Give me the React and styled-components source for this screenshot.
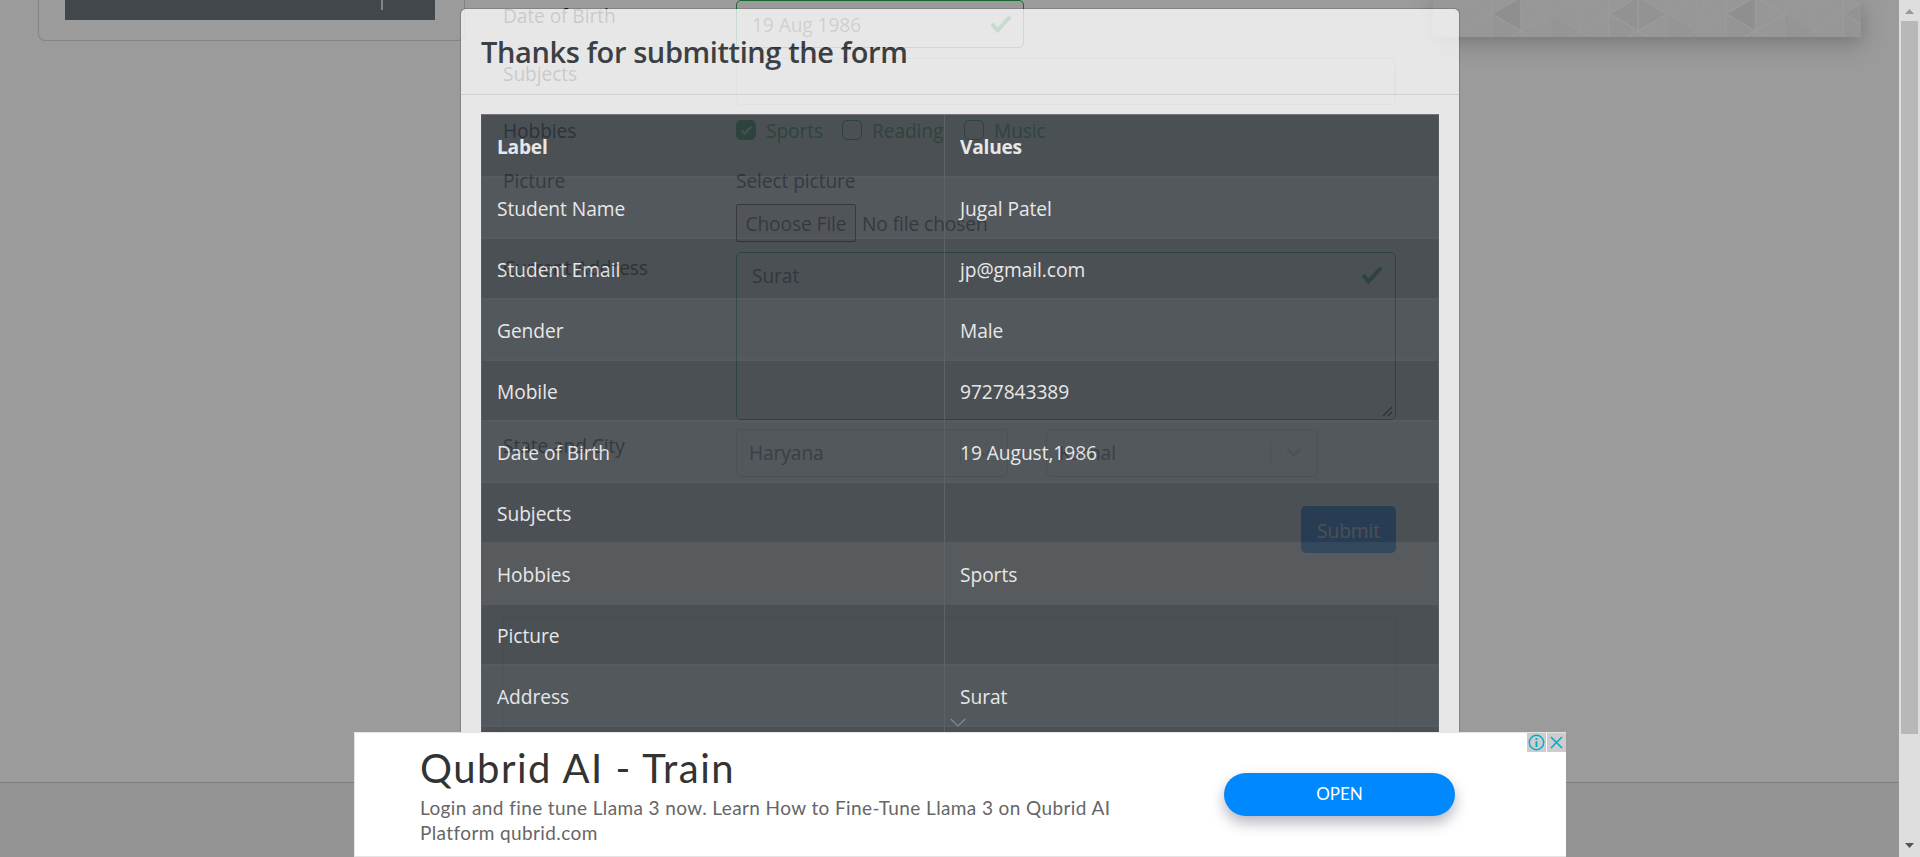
import React from "react";
import styled, { createGlobalStyle } from "styled-components";

const Global = createGlobalStyle`
  *, *::before, *::after { box-sizing: border-box; }
  body {
    margin: 0;
    overflow: hidden;
    background: #9b9b9b;
    color: #14171a;
    font-family: "Open Sans", "Noto Sans", sans-serif;
    font-size: 19.2px;
    line-height: 30px;
  }
`;

const Screen = styled.div`
  display: flex;
  width: 1920px;
  height: 857px;
  overflow: hidden;
  position: relative;
`;

const Main = styled.div`
  width: 1899px;
  display: flex;
  flex-direction: column;
`;

const Content = styled.main`
  height: 782px;
  display: flex;
  align-items: flex-start;
  padding-left: 38px;
`;

const Footer = styled.footer`
  flex: 1;
  border-top: 1px solid #7d7d7d;
  background: #949494;
`;

const SideNav = styled.aside`
  width: 427px;
  height: 41px;
  padding: 0 29px 0 26px;
  border: 1px solid #848484;
  border-top: 0;
  border-radius: 0 0 7px 7px;
`;

const NavBlock = styled.div`
  height: 20px;
  display: flex;
  justify-content: flex-end;
  padding-right: 52px;
  background: #42474b;
`;

const NavThumb = styled.i`
  width: 2px;
  height: 10px;
  background: #858585;
`;

const Form = styled.div`
  width: 893px;
  margin-left: 38px;
  letter-spacing: -0.1px;
`;

const Field = styled.div`
  display: flex;
  height: ${(p) => p.$h}px;
`;

const Label = styled.div`
  width: 233px;
  padding-top: ${(p) => p.$top}px;
  white-space: nowrap;
`;

const Control = styled.div`
  width: ${(p) => p.$w}px;
  height: ${(p) => p.$h}px;
  padding: ${(p) => p.$pad};
  display: flex;
  justify-content: space-between;
  border: 1px solid ${(p) => (p.$valid ? "#196630" : "#7d7d7d")};
  border-radius: 5px;
  color: #2d3135;
`;

const AreaEnd = styled.div`
  display: flex;
  flex-direction: column;
  align-items: flex-end;
  justify-content: space-between;
`;

const Checks = styled.div`
  display: flex;
  align-items: flex-start;
  color: #196630;
`;

const Box = styled.span`
  width: 20px;
  height: 20px;
  margin: 5px 10px 0 0;
  display: grid;
  place-items: center;
  border: 1px solid #196630;
  border-radius: 5px;
  background: ${(p) => (p.$on ? "#196630" : "transparent")};
`;

const CheckText = styled.span`
  width: ${(p) => p.$w}px;
  padding-top: 1px;
  white-space: nowrap;
`;

const FileRow = styled.div`
  display: flex;
  align-items: center;
  gap: 6px;
  white-space: nowrap;
`;

const FileButton = styled.div`
  width: 120px;
  height: 38px;
  border: 1px solid #202020;
  border-radius: 2px;
  background: #929192;
  line-height: 38px;
  text-align: center;
`;

const FileName = styled.span`
  padding-top: 1px;
`;

const Picture = styled.div`
  display: flex;
  flex-direction: column;
  gap: 8px;
  padding-top: 1px;
`;

const Separator = styled.i`
  width: 1px;
  height: 25px;
  margin-left: auto;
  background: #7d7d7d;
`;

const Selects = styled.div`
  display: flex;
  gap: 38px;
`;

const SelectValue = styled.span`
  line-height: 46px;
`;

const SelectEnd = styled.div`
  display: flex;
  align-items: center;
  gap: 15px;
  padding-right: 15px;
`;

const InputValue = styled.span`
  line-height: ${(p) => p.$lh}px;
`;

const TickSlot = styled.span`
  display: flex;
  padding: ${(p) => p.$pad};
`;

const Submit = styled.div`
  width: 95px;
  height: 47px;
  margin: 0 0 63px auto;
  border-radius: 5px;
  background: #004b9b;
  color: #9b9b9b;
  line-height: 50px;
  text-align: center;
`;

const EmptySlot = styled.div`
  height: 160px;
  border: 1px solid #8f8f8f;
`;

const Promo = styled.aside`
  width: 428px;
  height: 37px;
  margin-left: 37px;
  background: #979797;
  box-shadow: 0 8px 26px 2px rgba(0, 0, 0, 0.13), 0 4px 14px rgba(0, 0, 0, 0.1);
  svg { display: block; }
`;

const Backdrop = styled.div`
  position: absolute;
  inset: 8px 0 0 460px;
  width: 1000px;
`;

const Modal = styled.div`
  height: 900px;
  border: 1px solid rgba(0, 0, 0, 0.2);
  border-radius: 6px;
  background: #fff;
  background-clip: padding-box;
  opacity: 0.77;
  color: #212529;
`;

const ModalHeader = styled.header`
  height: 86px;
  padding: 14px 20px;
  border-bottom: 1px solid #dee2e6;
  font-size: 29px;
  font-weight: 600;
  line-height: 57px;
  letter-spacing: -0.4px;
`;

const Table = styled.div`
  width: 958px;
  margin: 19px 0 0 20px;
  border: 1px solid #454d55;
  border-bottom: 0;
  border-top-color: #6a6a6f;
  background: #343a40;
  color: #fff;
`;

const Row = styled.div`
  display: grid;
  grid-template-columns: 462px 1fr;
  height: ${(p) => (p.$head ? 63 : 61)}px;
  border-bottom: 2px solid #414850;
  background: ${(p) => (p.$head || p.$plain ? "#343a40" : p.$hover ? "#43494b" : "#3e444a")};
  font-weight: ${(p) => (p.$head ? 700 : 500)};
  line-height: ${(p) => (p.$head ? 63 : 61)}px;
`;

const Cell = styled.div`
  padding-left: 15px;
  border-left: ${(p) => (p.$value ? "1px solid #4b535b" : "0")};
  letter-spacing: ${(p) => (p.$tight ? -0.25 : -0.06)}px;
`;

const Ad = styled.section`
  position: absolute;
  left: 354px;
  top: 732px;
  width: 1212px;
  height: 125px;
  display: flex;
  border: 1px solid #e4e4e4;
  border-right: 0;
  background: #fff;
  font-family: Lato, sans-serif;
`;

const AdCopy = styled.div`
  width: 700px;
  margin-left: 65px;
  padding-top: 9px;
`;

const AdTitle = styled.div`
  color: #333;
  font-size: 40px;
  line-height: 52px;
  letter-spacing: 1.5px;
`;

const AdText = styled.div`
  color: #666;
  font-size: 19px;
  line-height: 25px;
  letter-spacing: 0.39px;
  padding-top: 1px;
  white-space: nowrap;
`;

const AdButton = styled.div`
  width: 231px;
  height: 43px;
  margin: 40px 0 0 104px;
  border-radius: 22px;
  background: #08f;
  box-shadow: 0 7px 14px rgba(40, 40, 70, 0.34);
  color: #fff;
  font-size: 17px;
  line-height: 42px;
  text-align: center;
`;

const AdControls = styled.div`
  display: flex;
  gap: 1px;
  margin-left: auto;
`;

const AdControl = styled.span`
  display: grid;
  place-items: center;
  width: 19px;
  height: 19px;
  background: #cdcdcd;
`;

const Collapse = styled.svg`
  position: absolute;
  left: 950px;
  top: 718px;
`;

const Scrollbar = styled.div`
  width: 21px;
  display: flex;
  flex-direction: column;
  align-items: center;
  padding: 9px 0;
  background: #dedede;
`;

const Thumb = styled.i`
  width: 17px;
  height: 713px;
  margin: 7px 0 auto;
  background: #b8b8b8;
`;

const Tick = ({ w = 20, h = 17, color = "#196630", sw = 4 }) => (
  <svg width={w} height={h} viewBox="0 0 20 17" fill="none">
    <path d="M2 9.2 L6.6 14.4 L18 2" stroke={color} strokeWidth={sw} strokeLinecap="round" />
  </svg>
);

const Chevron = () => (
  <svg width="16" height="10" viewBox="0 0 16 10" fill="none">
    <path d="M2 1.5 L8 7.5 L14 1.5" stroke="#7d7d7d" strokeWidth="2.4" strokeLinecap="round" />
  </svg>
);

const Grip = () => (
  <svg width="11" height="11" viewBox="0 0 11 11">
    <path d="M1 10 L10 1 M6 10 L10 6" stroke="#151515" strokeWidth="1.2" />
  </svg>
);

const Pattern = () => (
  <svg width="428" height="37">
    {[0, 1, 2, 3, 4, 5, 6, 7].map((i) => (
      <g key={i} transform={`translate(${i * 58.6} 0)`}>
        <path
          d="M0 14 L29.3 -3 V31 Z"
          fill="#8f8f8f"
          opacity={[0, 1, 0, 0.6, 0, 1, 0, 0.5][i]}
        />
        <path
          d="M29.3 -3 L58.6 14 L29.3 31 Z"
          fill="#929292"
          opacity={[0, 0, 0, 0.7, 0, 0, 0, 0.4][i]}
        />
        <path d="M0 37 V14 L29.3 31 V37 Z" fill="#949494" opacity="0.6" />
        <path
          d="M0 14 L29.3 -3 L58.6 14 L29.3 31 Z M29.3 31 L19 37 M29.3 31 L40 37 M0 0 V37 M29.3 0 V37"
          fill="none"
          stroke="#9b9b9b"
          strokeWidth="1.5"
          opacity={i % 2 ? 0.9 : 0.5}
        />
      </g>
    ))}
  </svg>
);

const Select = ({ value }) => (
  <Control $w={272} $h={48} $pad="0 0 0 12px">
    <SelectValue>{value}</SelectValue>
    <SelectEnd>
      <Separator />
      <Chevron />
    </SelectEnd>
  </Control>
);

const rows = [
  ["Student Name", "Jugal Patel"],
  ["Student Email", "jp@gmail.com"],
  ["Gender", "Male"],
  ["Mobile", "9727843389"],
  ["Date of Birth", "19 August,1986"],
  ["Subjects", ""],
  ["Hobbies", "Sports"],
  ["Picture", ""],
  ["Address", "Surat"],
  ["", ""],
];

export default function App() {
  return (
    <Screen>
      <Global />
      <Main>
        <Content>
          <SideNav>
            <NavBlock><NavThumb /></NavBlock>
          </SideNav>
          <Form>
            <Field $h={58}>
              <Label $top={1}>Date of Birth</Label>
              <Control $w={288} $h={48} $valid $pad="0 12px 0 15px">
                <InputValue $lh={48}>19 Aug 1986</InputValue>
                <TickSlot $pad="15px 0 0"><Tick /></TickSlot>
              </Control>
            </Field>
            <Field $h={57}>
              <Label $top={1}>Subjects</Label>
              <Control $w={660} $h={47} $pad="10px 0">
                <Separator />
              </Control>
            </Field>
            <Field $h={50}>
              <Label $top={1}>Hobbies</Label>
              <Checks>
                <Box $on><Tick w={11} h={9} color="#9b9b9b" sw={3.6} /></Box>
                <CheckText $w={76}>Sports</CheckText>
                <Box />
                <CheckText $w={92}>Reading</CheckText>
                <Box />
                <CheckText $w={60}>Music</CheckText>
              </Checks>
            </Field>
            <Field $h={87}>
              <Label $top={1}>Picture</Label>
              <Picture>
                <span>Select picture</span>
                <FileRow>
                  <FileButton>Choose File</FileButton>
                  <FileName>No file chosen</FileName>
                </FileRow>
              </Picture>
            </Field>
            <Field $h={177}>
              <Label $top={1}>Current Address</Label>
              <Control $w={660} $h={168} $valid $pad="0 2px 2px 15px">
                <InputValue $lh={46}>Surat</InputValue>
                <AreaEnd>
                  <TickSlot $pad="14px 11px 0 0"><Tick /></TickSlot>
                  <Grip />
                </AreaEnd>
              </Control>
            </Field>
            <Field $h={77}>
              <Label $top={2}>State and City</Label>
              <Selects>
                <Select value="Haryana" />
                <Select value="Karnal" />
              </Selects>
            </Field>
            <Submit>Submit</Submit>
            <EmptySlot />
          </Form>
          <Promo><Pattern /></Promo>
        </Content>
        <Footer />
      </Main>
      <Scrollbar>
        <svg width="9" height="5"><path d="M4.5 0 L9 5 H0 Z" fill="#9a9a9a" /></svg>
        <Thumb />
        <svg width="9" height="5"><path d="M0 0 H9 L4.5 5 Z" fill="#555" /></svg>
      </Scrollbar>

      <Backdrop>
        <Modal>
          <ModalHeader>Thanks for submitting the form</ModalHeader>
          <Table>
            <Row $head>
              <Cell $tight>Label</Cell>
              <Cell $tight $value>Values</Cell>
            </Row>
            {rows.map(([label, value], i) => (
              <Row key={i} $plain={i % 2 === 1} $hover={label === "Hobbies"}>
                <Cell>{label}</Cell>
                <Cell $value>{value}</Cell>
              </Row>
            ))}
          </Table>
        </Modal>
      </Backdrop>

      <Collapse width="16" height="10" fill="none">
        <path d="M0.8 1 L8 8 L15.2 1" stroke="#8a8b8c" strokeWidth="1.2" />
      </Collapse>
      <Ad>
        <AdCopy>
          <AdTitle>Qubrid AI - Train</AdTitle>
          <AdText>
            Login and fine tune Llama 3 now. Learn How to Fine-Tune Llama 3 on Qubrid AI
            <br />
            Platform qubrid.com
          </AdText>
        </AdCopy>
        <AdButton>OPEN</AdButton>
        <AdControls>
          <AdControl>
            <svg width="17" height="17" viewBox="0 0 17 17" fill="none" stroke="#00aecd">
              <circle cx="8.5" cy="8.5" r="7.2" strokeWidth="1.4" />
              <path d="M8.5 7.2 V13 M8.5 4 V5.9" strokeWidth="1.9" />
            </svg>
          </AdControl>
          <AdControl>
            <svg width="13" height="13" viewBox="0 0 13 13" stroke="#00aecd" strokeWidth="1.6">
              <path d="M1 1 L12 12 M12 1 L1 12" />
            </svg>
          </AdControl>
        </AdControls>
      </Ad>
    </Screen>
  );
}
